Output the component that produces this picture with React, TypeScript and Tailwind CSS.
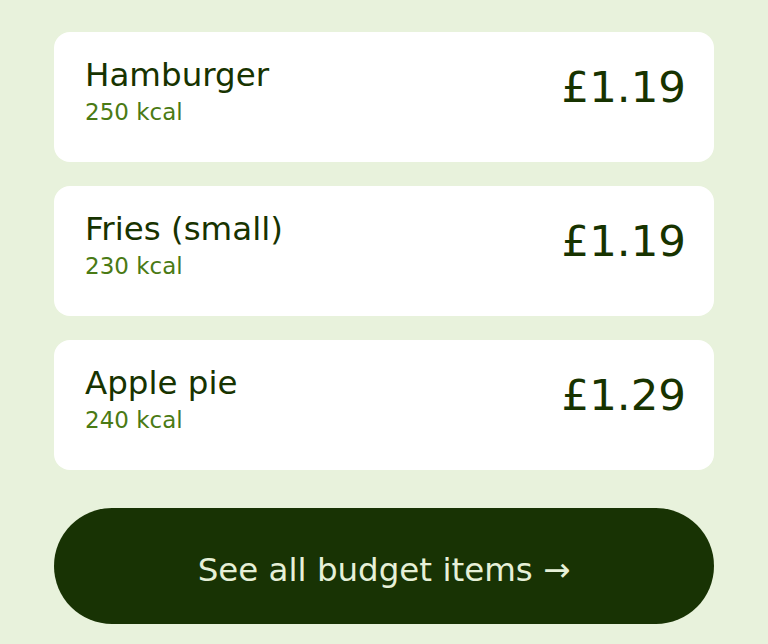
export default function App() {
  const items = [
    { name: "Hamburger", kcal: "250 kcal", price: "£1.19" },
    { name: "Fries (small)", kcal: "230 kcal", price: "£1.19" },
    { name: "Apple pie", kcal: "240 kcal", price: "£1.29" },
  ];
  return (
    <div
      className="min-h-[644px] w-[768px] bg-[#e8f2dc] px-[54px] pt-[32px]"
      style={{ fontFamily: '"DejaVu Sans", sans-serif' }}
    >
      <div className="flex flex-col gap-[24px]">
        {items.map((it) => (
          <div
            key={it.name}
            className="flex h-[130px] items-start justify-between rounded-[16px] bg-white pl-[31px] pr-[28px] pt-[24px]"
          >
            <div className="flex flex-col">
              <div className="text-[32.5px] leading-[38px] text-[#173300]">{it.name}</div>
              <div className="mt-[4px] text-[23px] leading-[28px] text-[#4a7a14]">{it.kcal}</div>
            </div>
            <div className="mt-[5px] text-[43.5px] leading-[52px] text-[#173300]">{it.price}</div>
          </div>
        ))}
      </div>
      <button className="mt-[38px] flex h-[116px] w-full items-center justify-center rounded-full bg-[#183304] pt-[8px] text-[32.5px] text-[#e6f0d8]">
        See all budget items →
      </button>
    </div>
  );
}
